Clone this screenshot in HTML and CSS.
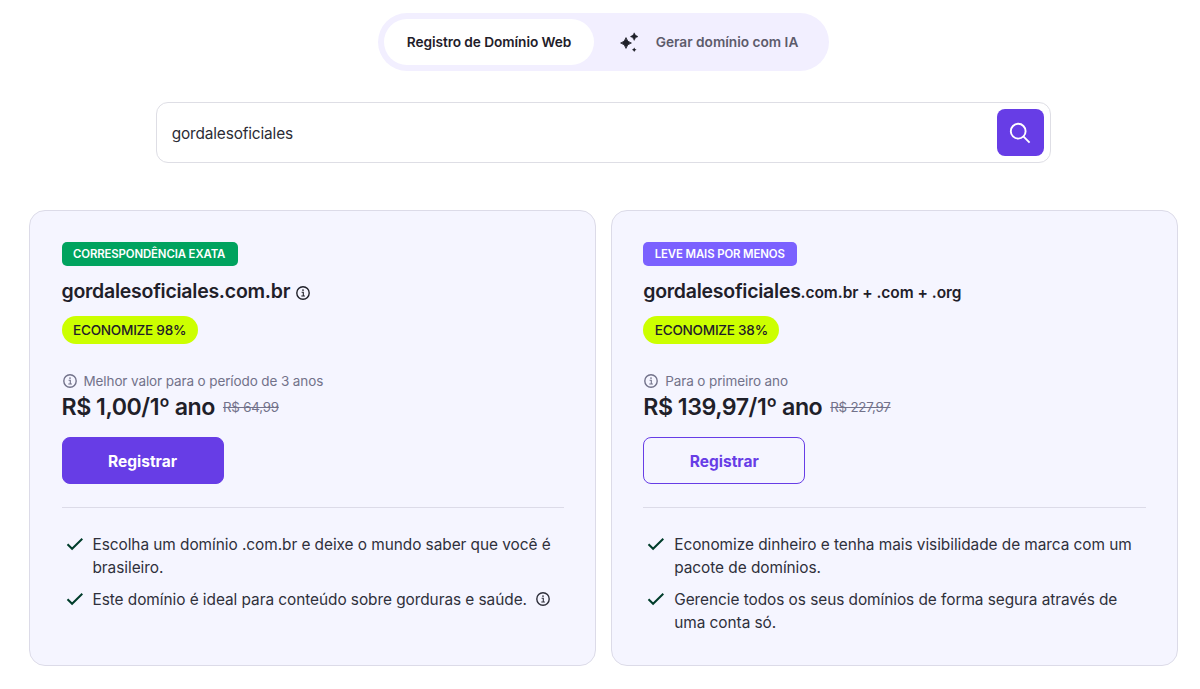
FILE: index.html
```html
<!DOCTYPE html>
<html lang="pt-BR">
<head>
<meta charset="UTF-8" />
<meta name="viewport" content="width=device-width, initial-scale=1" />
<title>Registro de Domínio Web</title>
<link rel="stylesheet" href="styles.css">
</head>
<body>
  <svg class="sprite" aria-hidden="true">
    <symbol id="icon-info" viewBox="0 0 14 14">
      <circle cx="7" cy="7" r="6.2" fill="none" stroke="currentColor" stroke-width="1.4" />
      <path d="M5.6 6.3h1.7v3.6M5.3 10h3.6" fill="none" stroke="currentColor" stroke-width="1.1" />
      <circle cx="7" cy="4.1" r=".85" fill="currentColor" />
    </symbol>
    <symbol id="icon-check" viewBox="0 0 18 14">
      <path d="M1.5 7.2l4.6 4.6L16.3 1.8" fill="none" stroke="currentColor" stroke-width="2" />
    </symbol>
  </svg>

  <main class="page">
    <div class="tabs" role="tablist">
      <button class="tab active" role="tab" aria-selected="true"><span>Registro de Domínio Web</span></button>
      <button class="tab" role="tab" aria-selected="false">
        <svg class="sparkles" viewBox="0 0 20 20" fill="currentColor">
          <path d="M7 5.6Q8 10 12.4 11Q8 12 7 16.4Q6 12 1.6 11Q6 10 7 5.6z" stroke="currentColor" stroke-width=".8" />
          <path d="M15.2.8Q15.9 3.9 19 4.6Q15.9 5.3 15.2 8.4Q14.5 5.3 11.4 4.6Q14.5 3.9 15.2.8z" stroke="currentColor" stroke-width=".5" />
          <path d="M15.2 15.4Q15.7 17.2 17.5 17.7Q15.7 18.2 15.2 20Q14.7 18.2 12.9 17.7Q14.7 17.2 15.2 15.4z" />
        </svg>
        <span>Gerar domínio com IA</span>
      </button>
    </div>

    <form class="search">
      <input type="text" class="search-input" value="gordalesoficiales" aria-label="Domínio" />
      <button type="button" class="search-btn" aria-label="Buscar">
        <svg viewBox="0 0 22 22" fill="none" stroke="currentColor" stroke-width="1.9">
          <circle cx="9.2" cy="9.2" r="7.4" />
          <path d="M14.6 14.6l6 6" />
        </svg>
      </button>
    </form>

    <div class="cards">
      <section class="card">
        <span class="label label-exact">CORRESPONDÊNCIA EXATA</span>
        <h2 class="domain">gordalesoficiales.com.br <svg class="info"><use href="#icon-info" /></svg></h2>
        <span class="discount">ECONOMIZE 98%</span>
        <p class="note"><svg class="info"><use href="#icon-info" /></svg><span>Melhor valor para o período de 3 anos</span></p>
        <div class="price"><strong>R$ 1,00/1º ano</strong><s>R$ 64,99</s></div>
        <button class="btn btn-primary">Registrar</button>
        <ul class="features">
          <li><svg class="check"><use href="#icon-check" /></svg><span>Escolha um domínio .com.br e deixe o mundo saber que você é<br>brasileiro.</span></li>
          <li><svg class="check"><use href="#icon-check" /></svg><span>Este domínio é ideal para conteúdo sobre gorduras e saúde.</span><svg class="info"><use href="#icon-info" /></svg></li>
        </ul>
      </section>

      <section class="card">
        <span class="label label-bundle">LEVE MAIS POR MENOS</span>
        <h2 class="domain">gordalesoficiales<small>.com.br + .com + .org</small></h2>
        <span class="discount">ECONOMIZE 38%</span>
        <p class="note"><svg class="info"><use href="#icon-info" /></svg><span>Para o primeiro ano</span></p>
        <div class="price"><strong>R$ 139,97/1º ano</strong><s>R$ 227,97</s></div>
        <button class="btn btn-outline">Registrar</button>
        <ul class="features">
          <li><svg class="check"><use href="#icon-check" /></svg><span>Economize dinheiro e tenha mais visibilidade de marca com um<br>pacote de domínios.</span></li>
          <li><svg class="check"><use href="#icon-check" /></svg><span>Gerencie todos os seus domínios de forma segura através de<br>uma conta só.</span></li>
        </ul>
      </section>
    </div>
  </main>
</body>
</html>
```
FILE: styles.css
```css
* {
  box-sizing: border-box;
}
body {
  margin: 0;
  font-family: Inter, "Open Sans", sans-serif;
  color: #1f2029;
  background: #fff;
}
button, input {
  font-family: inherit;
}
h2, p, ul {
  margin: 0;
  padding: 0;
}
.sprite {
  display: none;
}
.page {
  display: flex;
  flex-direction: column;
  align-items: center;
  padding: 12.5px 22.5px 0 29px;
}

/* Tabs */
.tabs {
  display: flex;
  width: 451px;
  height: 58.5px;
  padding: 6px;
  border-radius: 30px;
  background: #f2efff;
}
.tab {
  display: flex;
  align-items: center;
  justify-content: center;
  gap: 17px;
  flex: 1;
  padding: 0;
  border: none;
  border-radius: 24px;
  background: none;
  color: #1f2029;
  font-size: 13.7px;
  font-weight: 600;
  letter-spacing: 0;
  white-space: nowrap;
  cursor: pointer;
}
.tab.active {
  flex: 0 0 210.5px;
  background: #fff;
  letter-spacing: -0.07px;
}
.tab:not(.active) span {
  color: #5d5b6b;
}
.sparkles {
  width: 20px;
  height: 20px;
}

/* Search */
.search {
  display: flex;
  align-items: center;
  width: 895px;
  height: 61px;
  margin-top: 31px;
  padding: 0 6px 0 15px;
  border: 1px solid #dedee5;
  border-radius: 12px;
}
.search-input {
  flex: 1;
  padding: 2px 0 0;
  border: none;
  outline: none;
  color: #2b2c35;
  font-size: 15.4px;
  letter-spacing: -0.15px;
}
.search-btn {
  display: flex;
  align-items: center;
  justify-content: center;
  width: 47px;
  height: 47px;
  padding: 0;
  border: none;
  border-radius: 8px;
  background: #673de6;
  color: #fff;
  cursor: pointer;
}
.search-btn svg {
  width: 22px;
  height: 22px;
}

/* Result cards */
.cards {
  display: grid;
  grid-template-columns: 1fr 1fr;
  gap: 15px;
  width: 100%;
  margin-top: 47px;
}
.card {
  display: flex;
  flex-direction: column;
  align-items: flex-start;
  height: 456px;
  padding: 31px 31px 0 31.5px;
  border: 1px solid #dcdbe8;
  border-radius: 16px;
  background: #f5f5ff;
  white-space: nowrap;
}
.label {
  height: 24px;
  padding: 0 11.5px;
  border-radius: 5px;
  color: #fff;
  font-size: 11.4px;
  font-weight: 600;
  line-height: 24px;
  letter-spacing: -0.12px;
}
.label-exact {
  width: 176px;
  background: #00a35f;
}
.label-bundle {
  width: 154px;
  background: #7b61ff;
}
.domain {
  height: 28px;
  margin-top: 11px;
  font-size: 19.5px;
  font-weight: 600;
  line-height: 28px;
  letter-spacing: -0.26px;
}
.domain small {
  font-size: 15.5px;
  letter-spacing: -0.05px;
}
.info {
  flex: none;
  width: 14px;
  height: 14px;
}
.domain .info {
  margin-left: 1px;
  vertical-align: -2px;
}
.discount {
  width: 136px;
  height: 28px;
  margin-top: 11px;
  padding: 0 11.5px;
  border-radius: 14px;
  background: #ccff00;
  font-size: 13.6px;
  font-weight: 500;
  line-height: 28px;
  letter-spacing: -0.26px;
}
.note {
  display: flex;
  align-items: center;
  gap: 7px;
  height: 24px;
  margin-top: 25px;
  padding-left: 1px;
  color: #72728a;
  font-size: 13.5px;
  letter-spacing: -0.11px;
}
.price {
  display: flex;
  align-items: center;
  gap: 8px;
  height: 28px;
}
.price strong {
  font-size: 23.2px;
  font-weight: 600;
  letter-spacing: -0.48px;
}
.price s {
  color: #72728a;
  font-size: 13.3px;
  letter-spacing: -0.2px;
}
.btn {
  width: 162px;
  height: 47px;
  margin-top: 16px;
  padding: 1px 0 0;
  border: 1px solid #673de6;
  border-radius: 8px;
  font-size: 15.5px;
  font-weight: 700;
  cursor: pointer;
}
.btn-primary {
  background: #673de6;
  color: #fff;
}
.btn-outline {
  background: transparent;
  color: #673de6;
}
.features {
  display: flex;
  flex-direction: column;
  gap: 8px;
  width: 100%;
  margin-top: 23px;
  padding-top: 25px;
  border-top: 1px solid #dcdbe8;
  list-style: none;
  color: #2f303b;
  font-size: 15.4px;
  line-height: 23.4px;
  letter-spacing: -0.05px;
}
.features li {
  display: flex;
}
.check {
  flex: none;
  width: 18px;
  height: 14px;
  margin: 4px 9px 0 4px;
  color: #003d2b;
}
.features .info {
  margin: 4px 0 0 9px;
}
```
